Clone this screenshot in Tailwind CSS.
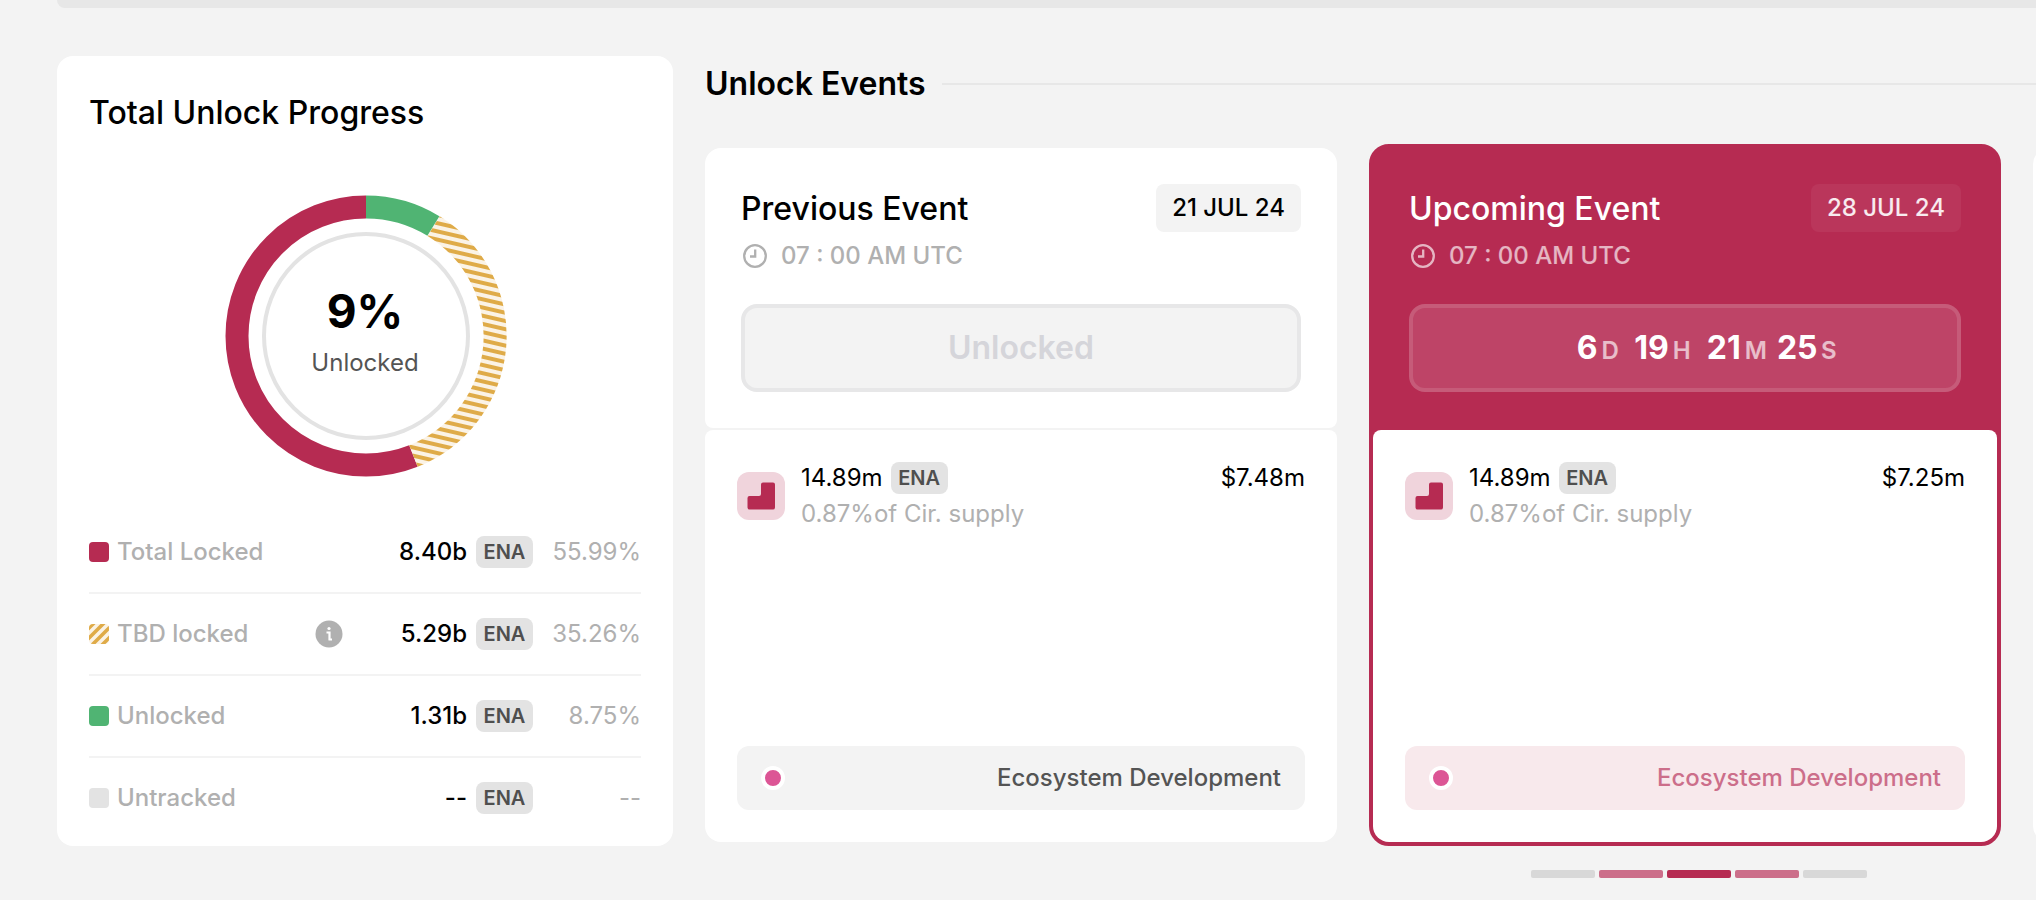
<!DOCTYPE html>
<html lang="en">
<head>
<meta charset="utf-8">
<title>ENA Token Unlocks</title>
<script src="https://cdn.jsdelivr.net/npm/@tailwindcss/browser@4"></script>
</head>
<body class="min-h-screen overflow-x-hidden bg-[#f3f3f3] font-['Inter',sans-serif] text-2xl text-black">
<div class="ml-[57px] h-2 rounded-bl-2xl bg-[#e7e7e7]"></div>
<main class="flex gap-8 pt-12 pl-[57px]">
  <section class="flex w-[616px] shrink-0 flex-col self-start rounded-2xl bg-white px-8 pt-8 pb-2">
    <h2 class="text-[32px] leading-[50px] font-medium">Total Unlock Progress</h2>
    <div class="mt-14 grid place-items-center">
      <svg class="col-start-1 row-start-1 size-[284px]" viewBox="-143 -142 284 284" fill="none" aria-hidden="true">
        <defs>
          <pattern id="stripes" width="8" height="8" patternUnits="userSpaceOnUse" patternTransform="rotate(13)">
            <rect width="8" height="8" fill="#fbf3e6"/>
            <rect width="8" height="4" fill="#dfab48"/>
          </pattern>
        </defs>
        <circle r="129" stroke="#b62b52" stroke-width="23" pathLength="100" stroke-dasharray="55.99 44.01" stroke-dashoffset="-44.01" transform="rotate(-90)"/>
        <path d="M73.7 -119.7A140.5 140.5 0 0 1 51.7 130.7L43.3 109.3A117.5 117.5 0 0 0 61.6 -100.1Z" fill="url(#stripes)"/>
        <circle r="129" stroke="#50b473" stroke-width="23" pathLength="100" stroke-dasharray="8.75 91.25" transform="rotate(-90)"/>
        <circle r="102" stroke="#e3e3e3" stroke-width="4"/>
      </svg>
      <div class="col-start-1 row-start-1 pb-1.5 text-center">
        <p class="text-[46px] leading-14 font-bold">9%</p>
        <p class="mt-1 leading-10 text-[#545454]">Unlocked</p>
      </div>
    </div>
    <table class="mt-[33px] w-full">
      <tbody class="divide-y-2 divide-[#f3f3f3]">
        <tr class="h-[82px]">
          <th scope="row" class="text-left font-medium text-[#b0b0b0]"><span class="flex items-center gap-2"><span class="size-5 rounded bg-[#b62b52]"></span>Total Locked</span></th>
          <td class="w-16"></td>
          <td class="text-right font-medium">8.40b</td>
          <td class="w-[66px]"><span class="ml-auto block w-[57px] rounded-lg bg-[#e3e3e3] text-center text-xl leading-8 font-semibold text-[#4f4f4f]">ENA</span></td>
          <td class="w-[108px] text-right text-[#b0b0b0]">55.99%</td>
        </tr>
        <tr class="h-[82px]">
          <th scope="row" class="text-left font-medium text-[#b0b0b0]"><span class="flex items-center gap-2">
            <svg class="size-5" viewBox="0 0 20 20" aria-hidden="true"><defs><clipPath id="sw"><rect width="20" height="20" rx="4"/></clipPath></defs><g clip-path="url(#sw)"><path fill="#fbf3e6" d="M0 0h20v20H0z"/><path d="M-3 7L7 -3M-3 17L17 -3M1 23L23 1M11 23L23 11" stroke="#dfab48" stroke-width="3.600"/></g></svg>TBD locked</span></th>
          <td><button type="button" aria-label="About TBD locked" class="block"><svg class="size-7" viewBox="0 0 28 28" aria-hidden="true"><circle cx="14" cy="14" r="13.5" fill="#b0b0b0"/><circle cx="14" cy="8.500" r="1.600" fill="#fff"/><path d="M11.500 12.500h3v7.500M13.500 19.500h3.500" fill="none" stroke="#fff" stroke-width="2.200"/></svg></button></td>
          <td class="text-right font-medium">5.29b</td>
          <td><span class="ml-auto block w-[57px] rounded-lg bg-[#e3e3e3] text-center text-xl leading-8 font-semibold text-[#4f4f4f]">ENA</span></td>
          <td class="text-right text-[#b0b0b0]">35.26%</td>
        </tr>
        <tr class="h-[82px]">
          <th scope="row" class="text-left font-medium text-[#b0b0b0]"><span class="flex items-center gap-2"><span class="size-5 rounded bg-[#50b473]"></span>Unlocked</span></th>
          <td></td>
          <td class="text-right font-medium">1.31b</td>
          <td><span class="ml-auto block w-[57px] rounded-lg bg-[#e3e3e3] text-center text-xl leading-8 font-semibold text-[#4f4f4f]">ENA</span></td>
          <td class="text-right text-[#b0b0b0]">8.75%</td>
        </tr>
        <tr class="h-[81px]">
          <th scope="row" class="text-left font-medium text-[#b0b0b0]"><span class="flex items-center gap-2"><span class="size-5 rounded bg-[#e3e3e3]"></span>Untracked</span></th>
          <td></td>
          <td class="text-right font-medium">--</td>
          <td><span class="ml-auto block w-[57px] rounded-lg bg-[#e3e3e3] text-center text-xl leading-8 font-semibold text-[#4f4f4f]">ENA</span></td>
          <td class="text-right text-[#b0b0b0]">--</td>
        </tr>
      </tbody>
    </table>
  </section>

  <section class="min-w-0 flex-1">
    <div class="flex h-14 items-center gap-4">
      <h2 class="text-[32px] leading-10 font-semibold">Unlock Events</h2>
      <div class="h-0.5 flex-1 bg-[#e7e7e7]"></div>
    </div>
    <div class="mt-8 flex items-stretch gap-8 overflow-hidden">
      <article class="my-1 flex w-[632px] shrink-0 flex-col gap-0.5">
        <header class="rounded-t-2xl rounded-b-lg bg-white p-9">
          <div class="flex items-start justify-between">
            <h3 class="text-[32px] leading-[50px] font-medium">Previous Event</h3>
            <span class="rounded-lg bg-[#f3f3f3] px-4 leading-12 font-medium">21 JUL 24</span>
          </div>
          <p class="mt-1.5 flex items-center gap-3 leading-8 font-medium text-[#b0b0b0]">
            <svg class="size-7" viewBox="0 0 28 28" fill="none" stroke="currentColor" stroke-width="2.300" aria-hidden="true"><circle cx="14" cy="14" r="10.800"/><path d="M14.200 7.500v7H9"/></svg>07 : 00 AM UTC</p>
          <button type="button" disabled class="mt-8 block h-[88px] w-full rounded-2xl border-4 border-[#e7e7e8] bg-[#f3f3f3] text-[32px] font-semibold text-[#d5d5da]">Unlocked</button>
        </header>
        <div class="flex h-[412px] flex-col justify-between rounded-t-lg rounded-b-2xl bg-white p-8">
          <div class="flex items-center gap-4">
            <svg class="size-12 shrink-0" viewBox="0 0 48 48" aria-hidden="true"><rect width="48" height="48" rx="12" fill="#f0d4dc"/><path d="M26 10.500h10a2 2 0 0 1 2 2v23a2 2 0 0 1-2 2H12.500a2 2 0 0 1-2-2V26a2 2 0 0 1 2-2H22a2 2 0 0 0 2-2v-9.500a2 2 0 0 1 2-2z" fill="#b62b52"/></svg>
            <div class="flex-1">
              <p class="flex items-center gap-2 leading-8">14.89m <span class="w-[57px] rounded-lg bg-[#e3e3e3] text-center text-xl leading-8 font-semibold text-[#4f4f4f]">ENA</span><span class="ml-auto">$7.48m</span></p>
              <p class="mt-1 leading-8 text-[#b0b0b0]">0.87%of Cir. supply</p>
            </div>
          </div>
          <div class="flex h-16 items-center justify-between rounded-xl bg-[#f3f3f3] px-6 font-medium text-[#545454]"><span class="size-6 rounded-full border-4 border-white bg-[#dc5595]"></span>Ecosystem Development</div>
        </div>
      </article>

      <article class="flex w-[632px] shrink-0 flex-col rounded-[20px] border-4 border-[#b62b52] bg-[#b62b52]">
        <header class="p-9 pb-[38px]">
          <div class="flex items-start justify-between">
            <h3 class="text-[32px] leading-[50px] font-medium text-white">Upcoming Event</h3>
            <span class="rounded-lg bg-white/5 px-4 leading-12 font-medium text-white/90">28 JUL 24</span>
          </div>
          <p class="mt-1.5 flex items-center gap-3 leading-8 font-medium text-white/65">
            <svg class="size-7" viewBox="0 0 28 28" fill="none" stroke="currentColor" stroke-width="2.300" aria-hidden="true"><circle cx="14" cy="14" r="10.800"/><path d="M14.200 7.500v7H9"/></svg>07 : 00 AM UTC</p>
          <div class="mt-8 flex h-[88px] items-center justify-center rounded-2xl border-4 border-white/12 bg-white/12 pl-6 text-white/65">
            <div class="flex items-baseline gap-2.5 font-semibold">
              <span class="flex items-baseline gap-1"><b class="w-10 text-right text-[32px] font-bold text-white">6</b>D</span>
              <span class="flex items-baseline gap-1"><b class="w-10 text-right text-[32px] font-bold text-white">19</b>H</span>
              <span class="flex items-baseline gap-1"><b class="w-10 text-right text-[32px] font-bold text-white">21</b>M</span>
              <span class="flex items-baseline gap-1"><b class="w-10 text-right text-[32px] font-bold text-white">25</b>S</span>
            </div>
          </div>
        </header>
        <div class="flex h-[412px] flex-col justify-between rounded-t-lg rounded-b-2xl bg-white p-8">
          <div class="flex items-center gap-4">
            <svg class="size-12 shrink-0" viewBox="0 0 48 48" aria-hidden="true"><rect width="48" height="48" rx="12" fill="#f0d4dc"/><path d="M26 10.500h10a2 2 0 0 1 2 2v23a2 2 0 0 1-2 2H12.500a2 2 0 0 1-2-2V26a2 2 0 0 1 2-2H22a2 2 0 0 0 2-2v-9.500a2 2 0 0 1 2-2z" fill="#b62b52"/></svg>
            <div class="flex-1">
              <p class="flex items-center gap-2 leading-8">14.89m <span class="w-[57px] rounded-lg bg-[#e3e3e3] text-center text-xl leading-8 font-semibold text-[#4f4f4f]">ENA</span><span class="ml-auto">$7.25m</span></p>
              <p class="mt-1 leading-8 text-[#b0b0b0]">0.87%of Cir. supply</p>
            </div>
          </div>
          <div class="flex h-16 items-center justify-between rounded-xl bg-[#f8e9ec] px-6 font-medium text-[#cc6e8a]"><span class="size-6 rounded-full border-4 border-white bg-[#dc5595]"></span>Ecosystem Development</div>
        </div>
      </article>
      <article class="my-1 w-[632px] shrink-0 rounded-2xl bg-white"></article>
    </div>
    <nav aria-label="Event slides" class="mt-6 flex justify-end gap-1 pr-[169px]">
      <button type="button" aria-label="Slide 1" class="h-2 w-16 rounded-xs bg-[#d8d8d8]"></button>
      <button type="button" aria-label="Slide 2" class="h-2 w-16 rounded-xs bg-[#cc6e8a]"></button>
      <button type="button" aria-label="Slide 3" class="h-2 w-16 rounded-xs bg-[#b62b52]"></button>
      <button type="button" aria-label="Slide 4" class="h-2 w-16 rounded-xs bg-[#cc6e8a]"></button>
      <button type="button" aria-label="Slide 5" class="h-2 w-16 rounded-xs bg-[#d8d8d8]"></button>
    </nav>
  </section>
</main>
</body>
</html>
